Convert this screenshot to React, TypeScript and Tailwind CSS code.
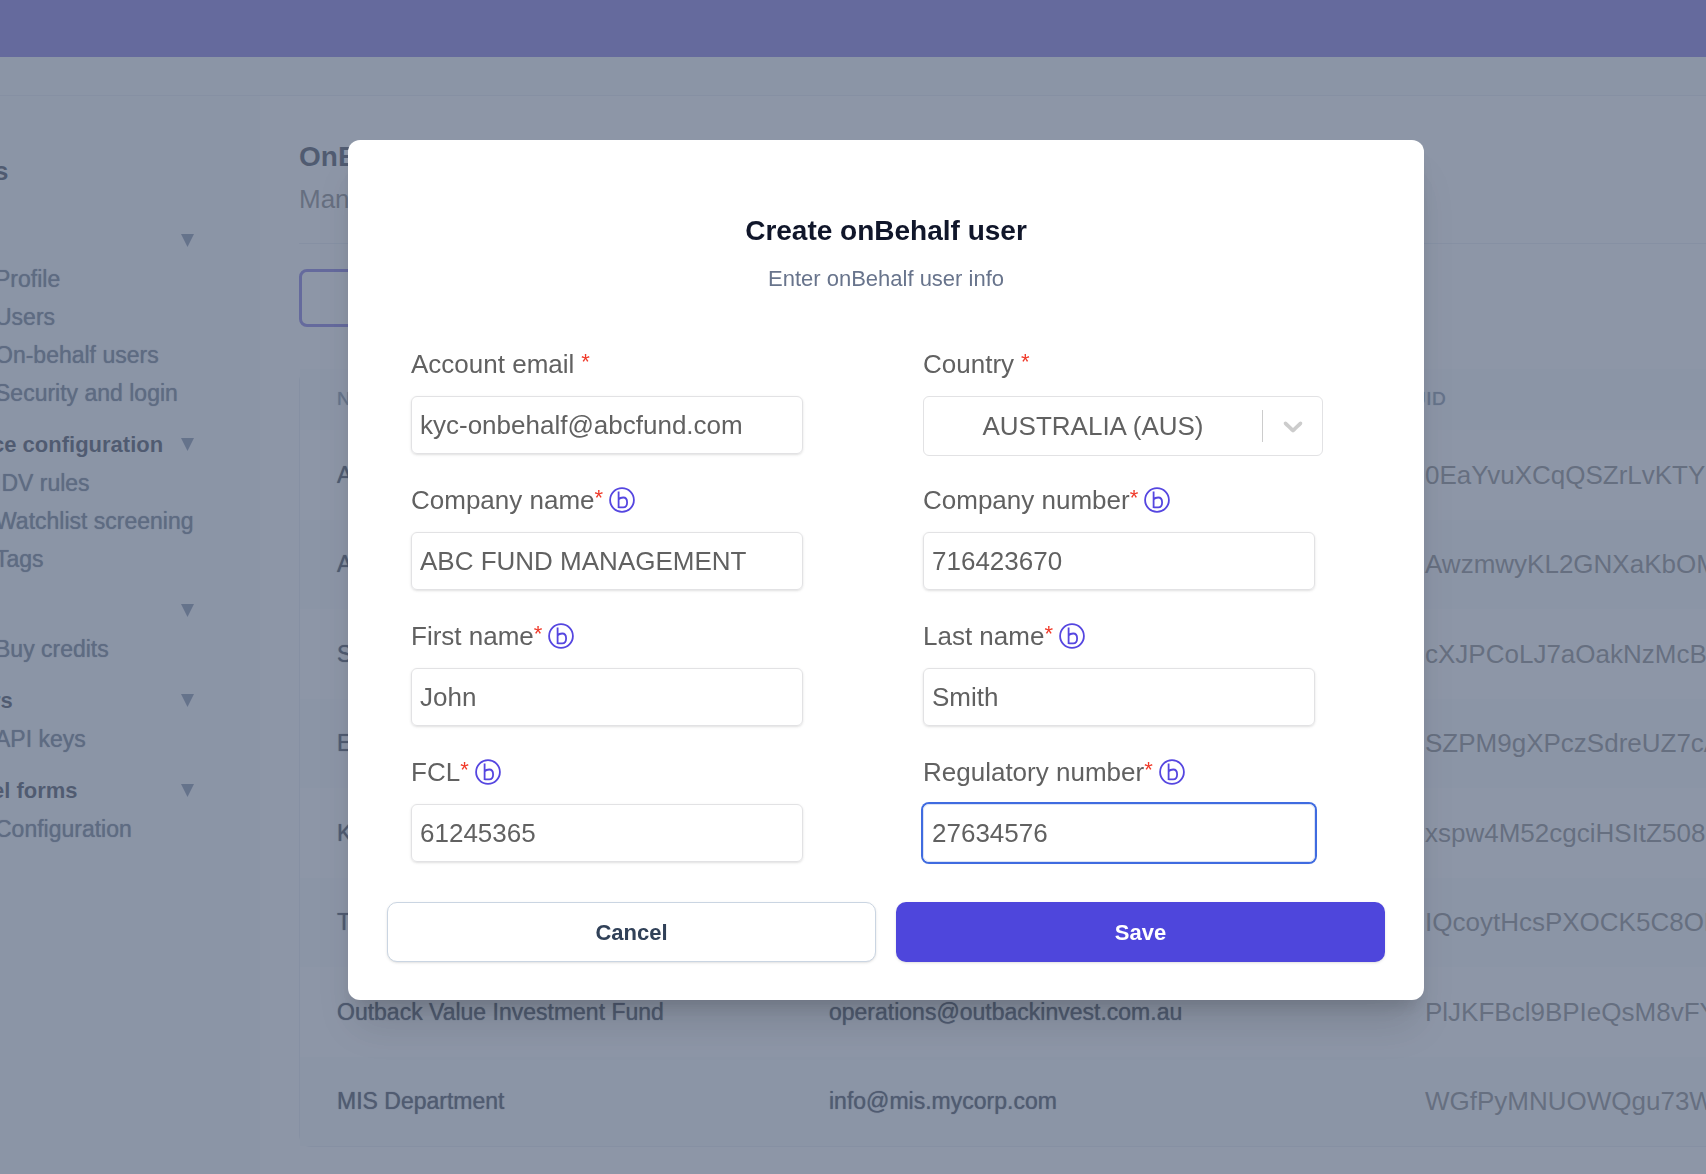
import React, { useId } from "react";

type NavGroup = { name: string; heading: string; items: string[] };

const groups: NavGroup[] = [
  { name: "Account", heading: "", items: ["Profile", "Users", "On-behalf users", "Security and login"] },
  { name: "Configuration", heading: "ce configuration", items: ["IDV rules", "Watchlist screening", "Tags"] },
  { name: "Billing", heading: "", items: ["Buy credits"] },
  { name: "Developers", heading: "rs", items: ["API keys"] },
  { name: "Forms", heading: "el forms", items: ["Configuration"] },
];

const rows = [
  { name: "A", email: "", uid: "0EaYvuXCqQSZrLvKTYU" },
  { name: "A", email: "", uid: "AwzmwyKL2GNXaKbOM" },
  { name: "S", email: "", uid: "cXJPCoLJ7aOakNzMcBA" },
  { name: "E", email: "", uid: "SZPM9gXPczSdreUZ7cA" },
  { name: "K", email: "", uid: "xspw4M52cgciHSItZ508" },
  { name: "T", email: "", uid: "IQcoytHcsPXOCK5C8OH" },
  { name: "Outback Value Investment Fund", email: "operations@outbackinvest.com.au", uid: "PlJKFBcl9BPIeQsM8vFY" },
  { name: "MIS Department", email: "info@mis.mycorp.com", uid: "WGfPyMNUOWQgu73W" },
];

function Sidebar() {
  return (
    <nav aria-label="Settings" className="w-[260px] shrink-0 overflow-hidden bg-slate-50 pt-[54px]">
      <h2 className="-ml-1.5 h-[70px] text-[26px] leading-[42px] font-bold text-slate-900">s</h2>
      <div className="flex flex-col gap-3">
        {groups.map((g) => (
          <section key={g.name}>
            <button
              type="button"
              aria-label={g.name}
              className="flex h-10 w-full items-center justify-between pr-[66px] text-[22px] whitespace-nowrap text-slate-900"
            >
              <span className="-ml-2 font-bold">{g.heading}</span>
              <svg viewBox="0 0 13 13" className="size-[13px] fill-slate-500" aria-hidden="true">
                <path d="M0 0H13L6.5 13Z" />
              </svg>
            </button>
            <ul>
              {g.items.map((item) => (
                <li
                  key={item}
                  className="-ml-[5px] h-[38px] text-[23px] leading-[38px] whitespace-nowrap text-slate-600 [text-shadow:0_0_1px_currentColor]"
                >
                  <a href="#">{item}</a>
                </li>
              ))}
            </ul>
          </section>
        ))}
      </div>
    </nav>
  );
}

function UsersPage() {
  return (
    <main className="min-w-0 flex-1 bg-white pt-[39px] pl-[39px]">
      <div className="border-b border-slate-200 pb-7 whitespace-nowrap">
        <h1 className="text-[28px] leading-[44px] font-bold text-slate-900">OnBehalf users</h1>
        <p className="pt-1 text-[26px] leading-8 text-[#666]">Manage onBehalf users</p>
      </div>
      <button
        type="button"
        aria-label="Create onBehalf user"
        className="mt-[25px] block h-[58px] w-[260px] rounded-lg border-[3px] border-[#5f4fd6]"
      />
      <div className="mt-[42px] rounded-l-xl border-b border-l border-slate-200">
        <table className="w-full table-fixed text-left whitespace-nowrap">
          <colgroup>
            <col className="w-[492px]" />
            <col className="w-[596px]" />
            <col />
          </colgroup>
          <thead>
            <tr className="h-[61px] bg-slate-50 text-[19px] tracking-wide text-slate-500 uppercase [text-shadow:0_0_1px_currentColor]">
              <th className="pl-[37px] font-medium">Name</th>
              <th className="pl-[37px] font-medium">Email</th>
              <th className="pl-6 font-medium">UID</th>
            </tr>
          </thead>
          <tbody>
            {rows.map((r) => (
              <tr key={r.uid} className="h-[90px] even:h-[89px] even:bg-slate-50">
                <td className="pl-[37px] text-[23px] text-slate-900 [text-shadow:0_0_1px_currentColor]">{r.name}</td>
                <td className="pl-[37px] text-[23px] text-slate-900 [text-shadow:0_0_1px_currentColor]">{r.email}</td>
                <td className="pl-[37px] text-[26px] text-[#666]">{r.uid}</td>
              </tr>
            ))}
          </tbody>
        </table>
      </div>
    </main>
  );
}

function BadgeB() {
  return (
    <svg viewBox="0 0 26 26" className="ml-1.5 size-[26px] stroke-[#5546e0]" fill="none" strokeWidth="1.8" aria-hidden="true">
      <circle cx="13" cy="13" r="11.9" />
      <path d="M9.6 4.6V20.9M9.6 20.4H14.2C17 20.4 18.1 18.9 18.1 15.5S16.9 10.5 14.2 10.5C12.1 10.5 10.5 11.2 9.6 12.4" />
    </svg>
  );
}

type FieldProps = { label: string; value: string; gap?: boolean; focused?: boolean };

function FieldLabel({ id, label, spaced }: { id: string; label: string; spaced?: boolean }) {
  return (
    <label htmlFor={id} className="flex h-10 items-center text-[26px] text-[#616161]">
      {label}
      <span className={spaced ? "ml-[7px] pb-1.5 text-[22px] text-[#f03a2a]" : "pb-1.5 text-[22px] text-[#f03a2a]"}>*</span>
      {!spaced && <BadgeB />}
    </label>
  );
}

function Field({ label, value, gap, focused }: FieldProps) {
  const id = useId();
  return (
    <div className="h-[136px]">
      <FieldLabel id={id} label={label} spaced={gap} />
      <input
        id={id}
        defaultValue={value}
        className={
          "mt-3 block h-[58px] w-full max-w-[392px] rounded-md border px-2 text-[26px] text-[#616161] shadow-sm outline-none " +
          (focused ? "border-[#dbe3f5] ring-2 ring-[#3f6be0]" : "border-[#e2e2e4]")
        }
      />
    </div>
  );
}

function CountryField() {
  const id = useId();
  return (
    <div className="h-[136px]">
      <FieldLabel id={id} label="Country" spaced />
      <div className="relative mt-3 h-[60px] max-w-[400px]">
        <select
          id={id}
          className="h-full w-full appearance-none rounded-md border border-[#e2e2e4] bg-white pr-[60px] text-center text-[26px] text-[#616161] outline-none"
        >
          <option>AUSTRALIA (AUS)</option>
        </select>
        <div className="pointer-events-none absolute inset-y-0 right-0 flex items-center">
          <span className="h-8 w-px bg-[#ccc]" />
          <svg viewBox="0 0 20 20" className="mx-[14px] size-8 fill-[#ccc]" aria-hidden="true">
            <path d="M4.516 7.548c0.436-0.446 1.043-0.481 1.576 0l3.908 3.747 3.908-3.747c0.533-0.481 1.141-0.446 1.574 0 0.436 0.445 0.408 1.197 0 1.615-0.406 0.418-4.695 4.502-4.695 4.502-0.217 0.223-0.502 0.335-0.787 0.335s-0.57-0.112-0.789-0.335c0 0-4.287-4.084-4.695-4.502s-0.436-1.17 0-1.615z" />
          </svg>
        </div>
      </div>
    </div>
  );
}

function CreateUserDialog() {
  return (
    <div
      role="dialog"
      aria-modal="true"
      aria-labelledby="dialog-title"
      className="w-full max-w-[1076px] rounded-xl bg-white px-[39px] pt-[69px] pb-[38px] shadow-[0_32px_40px_-8px_rgba(0,0,0,0.12),0_13px_16px_-6px_rgba(0,0,0,0.12)]"
    >
      <h2 id="dialog-title" className="text-center text-[28px] leading-[44px] font-bold text-[#10162a]">
        Create onBehalf user
      </h2>
      <p className="pt-2 text-center text-[22px] leading-9 text-[#68748c]">Enter onBehalf user info</p>
      <form className="pt-[47px]" onSubmit={(e) => e.preventDefault()}>
        <div className="grid grid-cols-2 gap-x-[74px] px-6">
          <Field label="Account email" value="kyc-onbehalf@abcfund.com" gap />
          <CountryField />
          <Field label="Company name" value="ABC FUND MANAGEMENT" />
          <Field label="Company number" value="716423670" />
          <Field label="First name" value="John" />
          <Field label="Last name" value="Smith" />
          <Field label="FCL" value="61245365" />
          <Field label="Regulatory number" value="27634576" focused />
        </div>
        <div className="mt-[14px] grid grid-cols-2 gap-5">
          <button
            type="button"
            className="h-[60px] rounded-[10px] border border-slate-300 bg-white text-[22px] font-bold text-slate-700 shadow-sm"
          >
            Cancel
          </button>
          <button type="submit" className="h-[60px] rounded-[10px] bg-[#4e46dc] text-[22px] font-bold text-white shadow-sm">
            Save
          </button>
        </div>
      </form>
    </div>
  );
}

export default function App() {
  return (
    <div className="flex h-screen flex-col overflow-hidden bg-white font-['Liberation_Sans',Arial,sans-serif]">
      <header className="h-[57px] shrink-0 bg-[#5f4fd6]" />
      <div className="h-[39px] shrink-0 border-b border-slate-200 bg-slate-50" />
      <div className="flex flex-1">
        <Sidebar />
        <UsersPage />
      </div>
      <div className="fixed inset-0 flex items-start justify-center overflow-hidden bg-[rgba(103,115,138,0.75)] pt-[140px] pl-[66px]">
        <CreateUserDialog />
      </div>
    </div>
  );
}
